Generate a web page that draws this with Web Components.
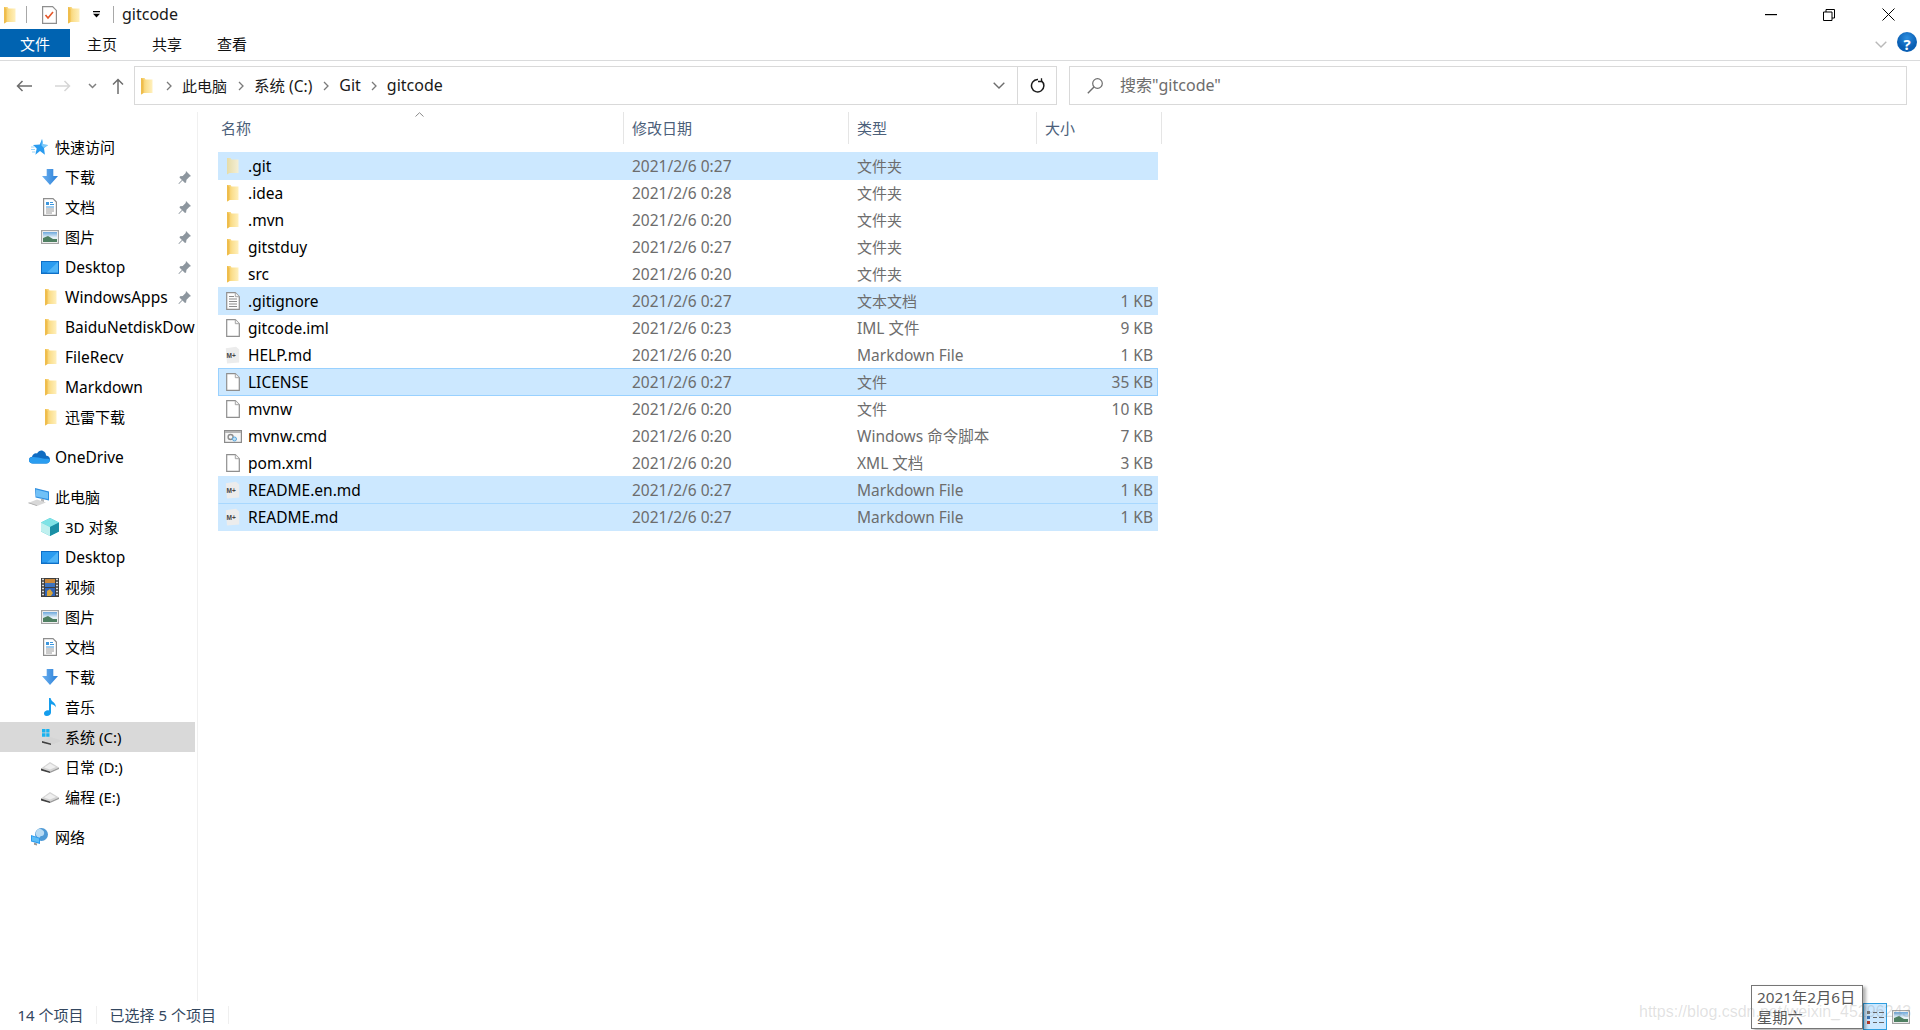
<!DOCTYPE html>
<html lang="zh-CN">
<head>
<meta charset="utf-8">
<title>gitcode</title>
<style>
  html, body { margin: 0; height: 100%; background: #fff; overflow: hidden; }
  body { font-family: "Noto Sans", "Noto Sans CJK SC", sans-serif; font-size: 15.5px; color: #000; }
</style>
</head>
<body>
<explorer-window>
  <title-bar slot="title" title-text="gitcode"></title-bar>
  <ribbon-tabs slot="title"></ribbon-tabs>
  <address-row slot="title"></address-row>

  <nav-pane slot="nav">
    <nav-item icon="star" level="0">快速访问</nav-item>
    <nav-item icon="download" level="1" pinned>下载</nav-item>
    <nav-item icon="docs" level="1" pinned>文档</nav-item>
    <nav-item icon="pics" level="1" pinned>图片</nav-item>
    <nav-item icon="desktop" level="1" pinned>Desktop</nav-item>
    <nav-item icon="folder" level="1" pinned>WindowsApps</nav-item>
    <nav-item icon="folder" level="1">BaiduNetdiskDow</nav-item>
    <nav-item icon="folder" level="1">FileRecv</nav-item>
    <nav-item icon="folder" level="1">Markdown</nav-item>
    <nav-item icon="folder" level="1">迅雷下载</nav-item>
    <nav-item icon="onedrive" level="0" group>OneDrive</nav-item>
    <nav-item icon="computer" level="0" group>此电脑</nav-item>
    <nav-item icon="cube" level="1">3D 对象</nav-item>
    <nav-item icon="desktop" level="1">Desktop</nav-item>
    <nav-item icon="video" level="1">视频</nav-item>
    <nav-item icon="pics" level="1">图片</nav-item>
    <nav-item icon="docs" level="1">文档</nav-item>
    <nav-item icon="download" level="1">下载</nav-item>
    <nav-item icon="music" level="1">音乐</nav-item>
    <nav-item icon="drivec" level="1" active>系统 (C:)</nav-item>
    <nav-item icon="drive" level="1">日常 (D:)</nav-item>
    <nav-item icon="drive" level="1">编程 (E:)</nav-item>
    <nav-item icon="network" level="0" group>网络</nav-item>
  </nav-pane>

  <file-list slot="list">
    <file-row icon="folder-hidden" name=".git" date="2021/2/6 0:27" type="文件夹" selected></file-row>
    <file-row icon="folder" name=".idea" date="2021/2/6 0:28" type="文件夹"></file-row>
    <file-row icon="folder" name=".mvn" date="2021/2/6 0:20" type="文件夹"></file-row>
    <file-row icon="folder" name="gitstduy" date="2021/2/6 0:27" type="文件夹"></file-row>
    <file-row icon="folder" name="src" date="2021/2/6 0:20" type="文件夹"></file-row>
    <file-row icon="text" name=".gitignore" date="2021/2/6 0:27" type="文本文档" size="1 KB" selected></file-row>
    <file-row icon="blank" name="gitcode.iml" date="2021/2/6 0:23" type="IML 文件" size="9 KB"></file-row>
    <file-row icon="md" name="HELP.md" date="2021/2/6 0:20" type="Markdown File" size="1 KB"></file-row>
    <file-row icon="blank" name="LICENSE" date="2021/2/6 0:27" type="文件" size="35 KB" selected focused></file-row>
    <file-row icon="blank" name="mvnw" date="2021/2/6 0:20" type="文件" size="10 KB"></file-row>
    <file-row icon="cmd" name="mvnw.cmd" date="2021/2/6 0:20" type="Windows 命令脚本" size="7 KB"></file-row>
    <file-row icon="blank" name="pom.xml" date="2021/2/6 0:20" type="XML 文档" size="3 KB"></file-row>
    <file-row icon="md" name="README.en.md" date="2021/2/6 0:27" type="Markdown File" size="1 KB" selected></file-row>
    <file-row icon="md" name="README.md" date="2021/2/6 0:27" type="Markdown File" size="1 KB" selected joined></file-row>
  </file-list>

  <status-bar slot="status"></status-bar>
</explorer-window>
<date-tip></date-tip>
<water-mark></water-mark>

<script>
const HAS_CJK = /[\u4e00-\u9fff]/;

// every icon is [width, height, svg body]
const ICONS = {
  folder: [13, 18, `<defs><linearGradient id="f"><stop offset="0" stop-color="#f3c65a"/><stop offset=".45" stop-color="#fbdf8e"/><stop offset="1" stop-color="#fff0bd"/></linearGradient></defs>
    <path d="M1 1h3.500l1 1.500H12.500V16H3.500L1 17.500z" fill="url(#f)"/><path d="M1 1v16.500L3.500 16V3z" fill="#efbd4c"/>`],
  'folder-hidden': [13, 18, `<defs><linearGradient id="f"><stop offset="0" stop-color="#e6dca8"/><stop offset="1" stop-color="#f4efd6"/></linearGradient></defs>
    <path d="M1 1h3.500l1 1.500H12.500V16H3.500L1 17.500z" fill="url(#f)"/>`],
  blank: [14, 18, `<path d="M.7.7h8.600l4 4v12.600H.7z" fill="#fff" stroke="#8f8f8f" stroke-width="1.200"/><path d="M9.300.7v4h4" fill="#f3f3f3" stroke="#a5a5a5"/>`],
  text: [14, 18, `<path d="M.7.7h8.600l4 4v12.600H.7z" fill="#fdfdfd" stroke="#8f8f8f" stroke-width="1.200"/><path d="M9.300.7v4h4" fill="#f3f3f3" stroke="#a5a5a5"/>
    <path d="M3 4.500h5M3 7h8M3 9.500h8M3 12h8M3 14.500h8" stroke="#8b8b8b"/>`],
  md: [15, 18, `<path d="M.8 2.200 11 .8l3.200 2.600V16.400L2 17.400z" fill="#ececec"/><text x="1.500" y="11.500" font-family="Liberation Sans, sans-serif" font-size="6.500" font-weight="700" fill="#444">M+</text>`],
  cmd: [18, 13, `<rect x=".6" y=".6" width="16.800" height="11.800" fill="#f6f6f6" stroke="#8b8b8b" stroke-width="1.200"/><rect x="1" y="1" width="16" height="2" fill="#b5b5b5"/>
    <circle cx="6.600" cy="7" r="2.500" fill="none" stroke="#8c8c8c" stroke-width="1.400"/><circle cx="10.500" cy="9" r="2" fill="#bfe0f5" stroke="#5aa6dc"/>`],
  star: [17, 16, `<path d="M11 0l1.200 5.400 4.800.6-4 3 .9 6.700-4.900-3.700-4.600 3.700 1.300-6.200L2 6l6.800-.6z" fill="#2a9bef"/><path d="M11 0l1.200 5.400 4.800.6-4 3-2.500-2.500z" fill="#7dcbfb"/><path d="M0 8h3.500M0 10.500h4M1 13h3.500" stroke="#9ad4f7"/>`],
  download: [16, 16, `<defs><linearGradient id="d" x2="1" y2="0"><stop offset="0" stop-color="#6db0ef"/><stop offset="1" stop-color="#2a80d8"/></linearGradient></defs><path d="M4.700 0h6.600v7H16l-8 9-8-9h4.700z" fill="url(#d)"/>`],
  docs: [14, 18, `<path d="M.6.6h9.400l3.400 3.400v13.400H.6z" fill="#fff" stroke="#8e8e8e" stroke-width="1.200"/><path d="M3 4h3v3H3z" fill="#3b96dd"/><path d="M7 4.500h3M7 6.500h4M3 9h8" stroke="#3b96dd"/><path d="M3 11h8M3 13h8M3 15h6" stroke="#9a9a9a"/>`],
  pics: [18, 14, `<defs><linearGradient id="s" x2="0" y2="1"><stop offset="0" stop-color="#6da8dc"/><stop offset=".55" stop-color="#e7f1f7"/></linearGradient></defs><rect x=".6" y=".6" width="16.800" height="12.800" fill="#fff" stroke="#a4a4a4" stroke-width="1.200"/><rect x="2" y="2" width="14" height="10" fill="url(#s)"/><path d="M2 8l5-2 5 3 4 0v3H2z" fill="#4f8062"/>`],
  desktop: [18, 13, `<rect width="18" height="13" fill="#0f6fc6"/><rect x="1" y="1" width="16" height="10.500" fill="#2a9bf0"/><path d="M17 1v10.500H6z" fill="#4fb4f7"/>`],
  cube: [18, 18, `<path d="M9 0l9 4.500v9L9 18l-9-4.500v-9z" fill="#3cc3cd"/><path d="M9 0l9 4.500L9 9 0 4.500z" fill="#7fe3e6"/><path d="M0 4.500L9 9v9l-9-4.500z" fill="#bff0ef"/><path d="M9 9l9-4.500v9L9 18z" fill="#1b8fa5"/>`],
  video: [18, 19, `<rect width="18" height="19" fill="#3d3d3d"/><path d="M1 1.500h2M1 4.500h2M1 7.500h2M1 10.500h2M1 13.500h2M1 16.500h2M15 1.500h2M15 4.500h2M15 7.500h2M15 10.500h2M15 13.500h2M15 16.500h2" stroke="#d9d9d9" stroke-width="1.400"/><rect x="4" y="1" width="10" height="8" fill="#c9873a"/><path d="M4 5h10v4H4z" fill="#3d73bf"/><rect x="4" y="10" width="10" height="8" fill="#2f63b8"/><path d="M6 13l3-2 3 4-2 3H6z" fill="#d7a43c"/>`],
  music: [13, 18, `<path d="M5 0h1.600c.3 4 5.800 4.400 5.200 9.500C11.400 7.500 9 6.500 7 6.300V14.500c0 2-2 3.500-4.200 3.500S0 16.800 0 15.300c0-1.800 2-3.100 3.700-3.100.5 0 1 .1 1.300.3z" fill="#149ded"/>`],
  drive: [18, 11, `<path d="M0 6.500L9 0l9 5.500-9 4z" fill="#d4d4d4"/><path d="M0 6.500l9 3V11L0 8.500z" fill="#3f3f3f"/><path d="M9 9.500l9-4V7l-9 4z" fill="#9c9c9c"/><path d="M3 5.500L9 1.500l6 3.500-6 2.500z" fill="#efefef"/>`],
  drivec: [19, 16, `<path d="M1 12l8-4 10 3v1.500l-9 3.500-9-2.500z" fill="#d4d4d4"/><path d="M1 12l9 2.500V16L1 13.800z" fill="#3f3f3f"/><path d="M1 0h3.500v3.500H1zM5.200 0h3.300v3.500H5.200zM1 4.200h3.500v3.500H1zM5.200 4.200h3.300v3.500H5.200z" fill="#19b2f0"/>`],
  onedrive: [21, 14, `<path d="M4 13.500C1.500 13.500 0 12 0 10c0-1.700 1-3 3-3.300C3.800 4 6 2.800 8 3.500 9.500 1 12 0 14 1c2 .8 3 2.500 3 4.500 2.500.3 4 2 4 4 0 2.200-1.500 4-4 4z" fill="#0f6cc2"/><path d="M4 13.500C1.500 13.500 0 12 0 10c0-1.700 1.500-3 4-3 3 0 7 1 10 1.500 3 .5 7-.5 7 1.500 0 2-1.500 3.500-4 3.500z" fill="#2a9df0"/>`],
  computer: [24, 18, `<path d="M7 0l14 3.500v9L7.500 9.500z" fill="#2f8fe0"/><path d="M8 1.500l12 3v6.500L8 8.500z" fill="#71c1f7"/><path d="M13 10.500l3 .7v3l-3-.7z" fill="#b5b5b5"/><path d="M0 15l9-3.500 9 3L9 18z" fill="#d8d8d8"/><path d="M0 15l9 3v-.8L1 14.500z" fill="#aaa"/>`],
  network: [18, 18, `<circle cx="10.500" cy="6.500" r="6.500" fill="#4f9ad6"/><path d="M8 1c3 0 6 2 5 5s-3 1-4 3-3 0-4-2 1-6 3-6z" fill="#b9dbf3"/><path d="M0 7l9 3v6l-9-2.500z" fill="#2a9bef"/><path d="M1 8.200l7 2.300v4L1 12.800z" fill="#5cbdf7"/><path d="M3 14.500l3 1v2l-3-.8z" fill="#9a9a9a"/>`],
  pin: [13, 13, `<path d="M8 0l5 5-1.500.8-3 3-.4 2.700-1.100.5-2.500-2.500L1 13l-.6-.6 3.500-3.500L1.500 6.400 2 5.300l2.700-.4 3-3z" fill="#8d969e"/>`],
  checkdoc: [15, 18, `<path d="M.6.6h10l3.800 3.800v13H.6z" fill="#fff" stroke="#8f8f8f" stroke-width="1.200"/><path d="M3.500 9l2.500 3 5-6" fill="none" stroke="#e4572a" stroke-width="1.600"/>`],
  back: [16, 12, `<path d="M16 6H1.500M6.500 1L1.500 6l5 5" fill="none" stroke="currentColor" stroke-width="1.500"/>`],
  forward: [16, 12, `<path d="M0 6h14.500M9.500 1l5 5-5 5" fill="none" stroke="currentColor" stroke-width="1.500"/>`],
  up: [12, 16, `<path d="M6 16V1.500M1 6.500l5-5 5 5" fill="none" stroke="currentColor" stroke-width="1.500"/>`],
  drop: [9, 6, `<path d="M1 1l3.500 3.500L8 1" fill="none" stroke="currentColor" stroke-width="1.500"/>`],
  crumb: [6, 10, `<path d="M1 1l4 4-4 4" fill="none" stroke="currentColor" stroke-width="1.300"/>`],
  chevron: [12, 7, `<path d="M.7.7L6 6l5.300-5.300" fill="none" stroke="currentColor" stroke-width="1.400"/>`],
  refresh: [15, 15, `<path d="M11.500 2.800a6.200 6.200 0 1 1-4-1.300H8" fill="none" stroke="currentColor" stroke-width="1.500"/><path d="M11.500 .2v3.300H8" fill="none" stroke="currentColor" stroke-width="1.300"/>`],
  search: [16, 16, `<circle cx="10.500" cy="5.500" r="4.800" fill="none" stroke="currentColor" stroke-width="1.200"/><path d="M7 9L.8 15.200" stroke="currentColor" stroke-width="1.400"/>`],
  qdrop: [7, 7, `<path d="M0 0h7v1.200H0zM0 2.700h7L3.500 6.500z" fill="#000"/>`],
  min: [12, 2, `<rect width="12" height="1.200" fill="#000"/>`],
  restore: [12, 12, `<path d="M.5 3h8.500v8.500H.5zM3 3V.5h8.500V9H9" fill="none" stroke="#000"/>`],
  close: [13, 13, `<path d="M.5.5l12 12M12.500.5l-12 12" stroke="#000"/>`],
  caret: [9, 5, `<path d="M.5 4.500L4.500 .7l4 3.800" fill="none" stroke="#8a8a8a"/>`],
  help: [20, 20, `<defs><radialGradient id="h" cy=".3"><stop offset="0" stop-color="#2d8fe0"/><stop offset="1" stop-color="#0a5fb4"/></radialGradient></defs><circle cx="10" cy="10" r="10" fill="url(#h)"/>`],
  details: [17, 14, `<path d="M0 1h3v3H0z" fill="#777"/><path d="M0 6h3v3H0z" fill="#3c74b8"/><path d="M0 11h3v3H0z" fill="#b33a2b"/><path d="M6 2.500h4M12 2.500h5M6 7.500h4M12 7.500h5M6 12.500h4M12 12.500h5" stroke="#666"/>`]
};

class WinIcon extends HTMLElement {
  connectedCallback() {
    const [w, h, body] = ICONS[this.getAttribute('name')];
    this.attachShadow({ mode: 'open' }).innerHTML = `
      <style>:host { display: inline-flex; flex: none; } svg { display: block; }</style>
      <svg xmlns="http://www.w3.org/2000/svg" width="${w}" height="${h}" viewBox="0 0 ${w} ${h}">${body}</svg>`;
  }
}

class ExplorerWindow extends HTMLElement {
  constructor() {
    super();
    this.attachShadow({ mode: 'open' }).innerHTML = `
      <style>
        :host { display: flex; flex-direction: column; height: 1030px; }
        .main { display: flex; height: 891px; }
      </style>
      <slot name="title"></slot>
      <div class="main"><slot name="nav"></slot><slot name="list"></slot></div>
      <slot name="status"></slot>`;
  }
}

class TitleBar extends HTMLElement {
  connectedCallback() {
    this.attachShadow({ mode: 'open' }).innerHTML = `
      <style>
        :host { display: flex; align-items: center; height: 29px; padding-left: 3px; }
        .sep { width: 1px; height: 17px; background: #a8a8a8; }
        .title { font-size: 16px; color: #1a1a1a; margin: -2px 0 0 8px; }
        .controls { margin-left: auto; display: flex; align-items: center; }
        .controls win-icon:nth-child(1) { margin-right: 46px; }
        .controls win-icon:nth-child(2) { margin-right: 47px; }
        .controls { padding-right: 25px; }
      </style>
      <win-icon name="folder"></win-icon>
      <span class="sep" style="margin-left:10px"></span>
      <win-icon name="checkdoc" style="margin-left:15px"></win-icon>
      <win-icon name="folder" style="margin-left:10px"></win-icon>
      <win-icon name="qdrop" style="margin-left:13px"></win-icon>
      <span class="sep" style="margin-left:13px"></span>
      <span class="title">${this.getAttribute('title-text')}</span>
      <div class="controls">
        <win-icon name="min"></win-icon>
        <win-icon name="restore"></win-icon>
        <win-icon name="close"></win-icon>
      </div>`;
  }
}

class RibbonTabs extends HTMLElement {
  constructor() {
    super();
    this.attachShadow({ mode: 'open' }).innerHTML = `
      <style>
        :host { display: flex; height: 31px; border-bottom: 1px solid #dadbdc; font-size: 15px; }
        .file { width: 70px; height: 28px; background: #0063b1; color: #fff; display: flex; align-items: center; justify-content: center; }
        .tab { display: flex; align-items: center; height: 28px; color: #111; }
        .tab + .tab { margin-left: 35px; }
        .tabs { display: flex; margin-left: 17px; }
        .right { margin-left: auto; display: flex; align-items: center; height: 30px; color: #b9b9b9; padding-right: 3px; }
        .help { position: relative; margin-left: 10px; }
        .q { position: absolute; inset: 0; display: flex; align-items: center; justify-content: center; color: #fff; font-weight: 700; font-size: 15px; }
      </style>
      <div class="file">文件</div>
      <div class="tabs"><div class="tab">主页</div><div class="tab">共享</div><div class="tab">查看</div></div>
      <div class="right">
        <win-icon name="chevron"></win-icon>
        <div class="help"><win-icon name="help"></win-icon><span class="q">?</span></div>
      </div>`;
  }
}

class AddressRow extends HTMLElement {
  constructor() {
    super();
    this.attachShadow({ mode: 'open' }).innerHTML = `
      <style>
        :host { display: flex; align-items: center; height: 39px; padding: 5px 13px 7px 16px; color: #6d6d6d; }
        .buttons { display: flex; align-items: center; width: 118px; flex: none; }
        .box { height: 37px; border: 1px solid #d9d9d9; display: flex; align-items: center; box-sizing: content-box; }
        .addr { width: 921px; color: #1a1a1a; font-size: 15.500px; }
        .crumbs { display: flex; align-items: center; gap: 10.500px; padding-left: 5px; flex: 1; }
        .crumbs span { margin-top: -1px; }
        .crumbs win-icon[name="crumb"] { color: #7a7a7a; }
        .end { width: 38px; height: 100%; border-left: 1px solid #d9d9d9; display: flex; align-items: center; justify-content: center; }
        .drop { color: #6d6d6d; margin-right: 12px; }
        .search { margin-left: 12px; flex: 1; padding-left: 17px; font-size: 16px; }
        .search span { margin: -3px 0 0 17px; color: #6d6d6d; }
      </style>
      <div class="buttons">
        <win-icon name="back"></win-icon>
        <win-icon name="forward" style="margin-left:23px;color:#d6d6d6"></win-icon>
        <win-icon name="drop" style="margin-left:17px;color:#808080"></win-icon>
        <win-icon name="up" style="margin-left:15px"></win-icon>
      </div>
      <div class="box addr">
        <div class="crumbs">
          <win-icon name="folder"></win-icon>
          <win-icon name="crumb" style="margin-left:2px"></win-icon>
          <span style="font-size:15px">此电脑</span><win-icon name="crumb"></win-icon>
          <span>系统 (C:)</span><win-icon name="crumb"></win-icon>
          <span style="font-size:16px">Git</span><win-icon name="crumb"></win-icon>
          <span style="font-size:16px;margin-left:-1px">gitcode</span>
        </div>
        <win-icon class="drop" name="chevron"></win-icon>
        <div class="end"><win-icon name="refresh"></win-icon></div>
      </div>
      <div class="box search"><win-icon name="search"></win-icon><span>搜索"gitcode"</span></div>`;
  }
}

class NavPane extends HTMLElement {
  constructor() {
    super();
    this.attachShadow({ mode: 'open' }).innerHTML = `
      <style>
        :host { display: block; width: 198px; height: 889px; flex: none; padding-top: 20px; box-sizing: border-box; border-right: 1px solid #f0f0f0; }
      </style>
      <slot></slot>`;
  }
}

class NavItem extends HTMLElement {
  connectedCallback() {
    const level = +this.getAttribute('level');
    const pinned = this.hasAttribute('pinned');
    const cjk = HAS_CJK.test(this.textContent);
    this.attachShadow({ mode: 'open' }).innerHTML = `
      <style>
        :host { display: flex; align-items: center; height: 30px; width: 195px; overflow: hidden; white-space: nowrap; color: #000; font-size: ${cjk ? 15 : 15.5}px; }
        :host([group]) { margin-top: 10px; }
        :host([active]) { background: #d9d9d9; }
        .ico { width: ${level ? 65 : 55}px; flex: none; display: flex; justify-content: center; box-sizing: border-box; padding-left: ${level ? 35 : 24}px; }
        .label { margin-top: ${cjk ? -2 : 0}px; }
        .pin { margin-left: auto; margin-right: 4px; }
      </style>
      <div class="ico"><win-icon name="${this.getAttribute('icon')}"></win-icon></div>
      <span class="label"><slot></slot></span>
      ${pinned ? '<win-icon class="pin" name="pin"></win-icon>' : ''}`;
  }
}

const COLUMNS = '406px 225px 188px 121px';

class FileList extends HTMLElement {
  constructor() {
    super();
    this.attachShadow({ mode: 'open' }).innerHTML = `
      <style>
        :host { display: block; margin-left: 20px; width: 944px; }
        .head { display: grid; grid-template-columns: 406px 225px 188px 125px; height: 32px; margin-bottom: 8px; font-size: 15px; color: #4c607a; position: relative; }
        .head div { display: flex; align-items: center; padding: 0 0 2px 8px; border-right: 1px solid #e5e5e5; box-sizing: border-box; }
        .head div:first-child { padding-left: 3px; }
        .caret { position: absolute; left: 197px; top: 0; }
      </style>
      <div class="head"><div>名称</div><div>修改日期</div><div>类型</div><div>大小</div>
        <win-icon class="caret" name="caret"></win-icon></div>
      <slot></slot>`;
  }
}

class FileRow extends HTMLElement {
  connectedCallback() {
    const attr = n => this.getAttribute(n) || '';
    const onlyCjk = /^[\u4e00-\u9fff]+$/.test(attr('type'));
    const typeShift = HAS_CJK.test(attr('type')) ? -2 : 0;
    this.attachShadow({ mode: 'open' }).innerHTML = `
      <style>
        :host { display: grid; grid-template-columns: ${COLUMNS}; width: 940px; height: 28px; margin-bottom: -1px; box-sizing: border-box; border: 1px solid transparent; align-items: center; color: #6d6d6d; position: relative; font-size: 15.500px; }
        :host([selected]) { background: #cce8ff; border-color: #cce8ff; }
        :host([focused]) { border-color: #99d1ff; }
        :host([joined]) { border-top-color: #a8d8ff; }
        .name { display: flex; align-items: center; color: #000; }
        .ico { width: 27px; margin-right: 2px; display: flex; justify-content: center; flex: none; }
        .date, .type { padding-left: 8px; margin-left: -1px; }
        .type { font-size: ${onlyCjk ? 15 : 15.5}px; margin-top: ${typeShift}px; }
        .size { text-align: right; padding-right: 6px; }
      </style>
      <div class="name"><div class="ico"><win-icon name="${attr('icon')}"></win-icon></div>${attr('name')}</div>
      <div class="date">${attr('date')}</div>
      <div class="type">${attr('type')}</div>
      <div class="size">${attr('size')}</div>`;
  }
}

class StatusBar extends HTMLElement {
  constructor() {
    super();
    this.attachShadow({ mode: 'open' }).innerHTML = `
      <style>
        :host { display: flex; align-items: center; height: 27px; box-sizing: border-box; padding: 0 0 4px 17.500px; font-size: 15px; color: #33475f; position: relative; }
        .sep { width: 1px; height: 18px; background: #efefef; margin: 0 12.500px; }
        .views { margin-left: auto; display: flex; align-items: center; padding-right: 10px; height: 27px; margin-bottom: -4px; }
        .on { width: 24px; height: 27px; background: #cce8ff; box-sizing: border-box; border: 1px solid #2f9fe0; display: flex; align-items: center; justify-content: center; }
      </style>
      <span>14 个项目</span><span class="sep"></span>
      <span>已选择 5 个项目</span><span class="sep"></span>
      <div class="views">
        <div class="on"><win-icon name="details"></win-icon></div>
        <win-icon name="pics" style="margin-left:5px"></win-icon>
      </div>`;
  }
}

// lies over the status bar, like the clock popup in the shot
class DateTip extends HTMLElement {
  constructor() {
    super();
    this.attachShadow({ mode: 'open' }).innerHTML = `
      <style>
        :host { position: absolute; left: 1751px; top: 985px; width: 112px; height: 44px; box-sizing: border-box; border: 1px solid #767676; background: #fff; padding: 1px 5px; font-size: 15.300px; line-height: 20px; color: #575757; box-shadow: 3px 2px 3px rgba(0,0,0,.3); white-space: nowrap; }
      </style>
      <div>2021年2月6日</div><div>星期六</div>`;
  }
}

class WaterMark extends HTMLElement {
  constructor() {
    super();
    this.attachShadow({ mode: 'open' }).innerHTML = `
      <style>
        :host { position: absolute; left: 1639px; top: 1003px; font-family: "Liberation Sans", sans-serif; font-size: 16px; color: rgba(120,120,120,.22); white-space: nowrap; pointer-events: none; }
      </style>
      https://blog.csdn.net/weixin_45296243`;
  }
}

customElements.define('win-icon', WinIcon);
customElements.define('explorer-window', ExplorerWindow);
customElements.define('title-bar', TitleBar);
customElements.define('ribbon-tabs', RibbonTabs);
customElements.define('address-row', AddressRow);
customElements.define('nav-pane', NavPane);
customElements.define('nav-item', NavItem);
customElements.define('file-list', FileList);
customElements.define('file-row', FileRow);
customElements.define('status-bar', StatusBar);
customElements.define('date-tip', DateTip);
customElements.define('water-mark', WaterMark);
</script>
</body>
</html>
